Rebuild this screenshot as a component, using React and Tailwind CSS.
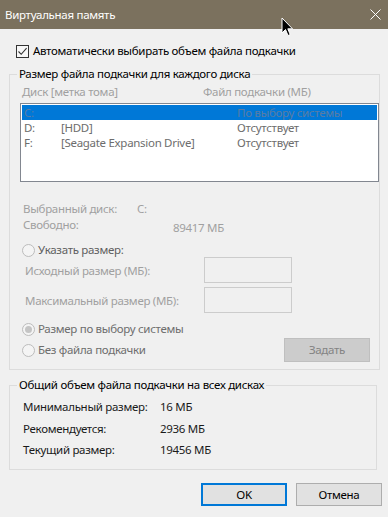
import React from "react";

const font = { fontFamily: '"Noto Sans", "Liberation Sans", sans-serif' };

const Radio = ({ checked }) => (
  <span className="w-[13px] h-[13px] rounded-full border border-[#bcbcbc] bg-[#f4f4f4] flex items-center justify-center shrink-0">
    {checked && <span className="w-[7px] h-[7px] rounded-full bg-[#c4c4c4]" />}
  </span>
);

const ListRow = ({ disk, label, value, selected }) => (
  <div
    className={`h-[15px] leading-[15px] flex items-center ${
      selected ? "bg-[#0078d7] text-[#5a7ca3]" : "text-[#6d6d6d]"
    }`}
  >
    <span className="w-[39px] pl-[2px]">{disk}</span>
    <span className="w-[176px]">{label}</span>
    <span>{value}</span>
  </div>
);

const InfoRow = ({ label, value, className = "" }) => (
  <div className={`h-[16px] flex items-center text-[#1a1a1a] ${className}`}>
    <span className="w-[150px] pl-[13px]">{label}</span>
    <span>{value}</span>
  </div>
);

export default function App() {
  return (
    <div
      className="relative w-[388px] h-[517px] bg-[#f0f0f0] overflow-hidden text-[11.5px] tracking-[-0.3px] leading-[16px] text-black"
      style={font}
    >
      {/* Title bar */}
      <div className="h-[29px] bg-[#7b715e] flex items-center justify-between pl-[5px] pr-[7px] text-white">
        <span>Виртуальная память</span>
        <svg width="11" height="11" viewBox="0 0 11 11" className="mb-[1px]">
          <path d="M0.5 0.5 L10.5 10.5 M10.5 0.5 L0.5 10.5" stroke="#ffffff" strokeWidth="1" />
        </svg>
      </div>

      {/* Auto checkbox */}
      <div className="mt-[15px] ml-[16px] h-[14px] flex items-center gap-[4px]">
        <span className="w-[13px] h-[13px] border border-[#333333] bg-[#f7f7f7] flex items-center justify-center">
          <svg width="11" height="11" viewBox="0 0 11 11">
            <path d="M1.5 5.5 L4.2 8.3 L9.6 2.2" fill="none" stroke="#333333" strokeWidth="1.1" />
          </svg>
        </span>
        <span>Автоматически выбирать объем файла подкачки</span>
      </div>

      {/* Per-disk group */}
      <fieldset className="mt-[8px] ml-[9px] w-[368px] border border-[#dcdcdc] px-0 pb-[7px]">
        <legend className="ml-[7px] px-[2px] h-[16px]">Размер файла подкачки для каждого диска</legend>

        <div className="mt-[2px] h-[16px] flex items-center text-[#a0a0a0]">
          <span className="w-[193px] pl-[12px]">Диск [метка тома]</span>
          <span>Файл подкачки (МБ)</span>
        </div>

        <div className="mt-[3px] ml-[10px] w-[359px] h-[79px] border border-[#828790] bg-white p-[1px]">
          <ListRow disk="C:" label="" value="По выбору системы" selected />
          <ListRow disk="D:" label="[HDD]" value="Отсутствует" />
          <ListRow disk="F:" label="[Seagate Expansion Drive]" value="Отсутствует" />
        </div>

        <div className="mt-[19px] h-[16px] flex items-center text-[#a0a0a0]">
          <span className="w-[127px] pl-[13px]">Выбранный диск:</span>
          <span>C:</span>
        </div>
        <div className="h-[16px] flex items-start text-[#a0a0a0]">
          <span className="w-[163px] pl-[13px]">Свободно:</span>
          <span className="mt-[3px]">89417 МБ</span>
        </div>

        <div className="mt-[10px] h-[14px] flex items-center gap-[3px] pl-[12px] text-[#5f5f5f]">
          <Radio />
          <span>Указать размер:</span>
        </div>

        <div className="h-[26px] flex items-center text-[#a0a0a0]">
          <span className="w-[194px] pl-[15px] pt-[2px]">Исходный размер (МБ):</span>
          <span className="w-[88px] h-[26px] border border-[#cccccc] bg-[#f0f0f0]" />
        </div>
        <div className="mt-[4px] h-[26px] flex items-center text-[#a0a0a0]">
          <span className="w-[194px] pl-[15px] pt-[2px]">Максимальный размер (МБ):</span>
          <span className="w-[88px] h-[26px] border border-[#cccccc] bg-[#f0f0f0]" />
        </div>

        <div className="mt-[9px] h-[14px] flex items-center gap-[3px] pl-[12px] text-[#6d6d6d]">
          <Radio checked />
          <span>Размер по выбору системы</span>
        </div>

        <div className="mt-[2px] h-[24px] flex items-center pl-[12px] pr-[9px] text-[#6d6d6d]">
          <Radio />
          <span className="ml-[3px] flex-1">Без файла подкачки</span>
          <span className="w-[86px] h-[24px] bg-[#cccccc] border border-[#bfbfbf] text-[#838383] flex items-center justify-center">
            Задать
          </span>
        </div>
      </fieldset>

      {/* Total group */}
      <fieldset className="mt-[7px] ml-[9px] w-[368px] border border-[#dcdcdc] px-0 pb-[11px]">
        <legend className="ml-[7px] px-[2px] h-[16px]">Общий объем файла подкачки на всех дисках</legend>
        <InfoRow className="mt-[6px]" label="Минимальный размер:" value="16 МБ" />
        <InfoRow className="mt-[6px]" label="Рекомендуется:" value="2936 МБ" />
        <InfoRow className="mt-[5px]" label="Текущий размер:" value="19456 МБ" />
      </fieldset>

      {/* Dialog buttons */}
      <div className="mt-[13px] flex justify-end gap-[9px] pr-[6px]">
        <button className="w-[86px] h-[23px] border-2 border-[#0078d7] bg-[#e1e1e1] flex items-center justify-center">
          OK
        </button>
        <button className="w-[86px] h-[23px] border border-[#adadad] bg-[#e1e1e1] flex items-center justify-center">
          Отмена
        </button>
      </div>

      {/* Mouse cursor */}
      <svg className="absolute left-[281px] top-[17px]" width="13" height="20" viewBox="0 0 13 20">
        <path d="M1 1 L1 16 L4.5 12.5 L7 18.5 L9.2 17.6 L6.8 11.8 L11.5 11.8 Z" fill="#000000" stroke="#ffffff" strokeWidth="1" />
      </svg>
    </div>
  );
}
